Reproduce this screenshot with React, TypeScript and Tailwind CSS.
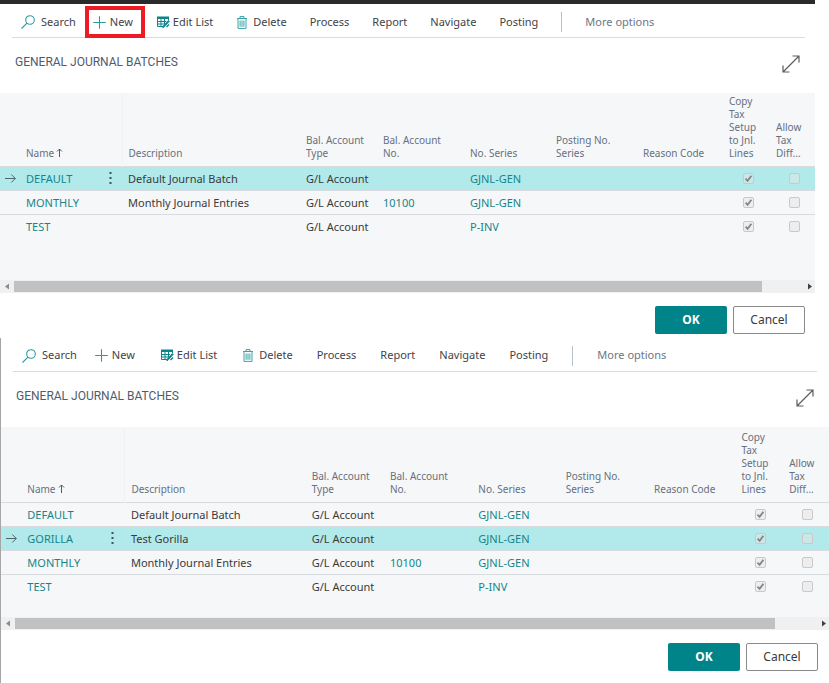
import React from 'react';

type Batch = {
  name: string;
  description: string;
  balAccountNo: string;
  series: string;
};

type PanelProps = {
  id: string;
  batches: Batch[];
  current: string;
  highlightNew?: boolean;
  wide?: boolean;
};

const DEFAULT: Batch = { name: 'DEFAULT', description: 'Default Journal Batch', balAccountNo: '', series: 'GJNL-GEN' };
const GORILLA: Batch = { name: 'GORILLA', description: 'Test Gorilla', balAccountNo: '', series: 'GJNL-GEN' };
const MONTHLY: Batch = { name: 'MONTHLY', description: 'Monthly Journal Entries', balAccountNo: '10100', series: 'GJNL-GEN' };
const TEST: Batch = { name: 'TEST', description: '', balAccountNo: '', series: 'P-INV' };

const SearchIcon = () => (
  <svg className="w-[14px] h-[14px] shrink-0" viewBox="0 0 14 14" fill="none" stroke="#2a9a9e" strokeWidth="1.1">
    <circle cx="9" cy="5" r="4.3" />
    <path d="M6 8.2L0.5 13.5" />
  </svg>
);

const PlusIcon = () => (
  <svg className="w-[13px] h-[13px] shrink-0" viewBox="0 0 13 13" fill="none" stroke="#2a9a9e" strokeWidth="1.1">
    <path d="M6.5 0.3V12.7M0.2 6.5H12.8" />
  </svg>
);

const EditListIcon = () => (
  <svg className="w-[13px] h-[13px] shrink-0" viewBox="0 0 13 13" fill="none" stroke="#0b858b">
    <path d="M0 0.5H12V3H0Z" fill="#0b858b" stroke="none" />
    <path d="M0.5 2V10.5H6M0.5 5.5H9M0.5 8H7M4 3V10.5M7.5 3V8M11.5 2V4" />
    <path d="M12.4 5.2L7.4 10.8L5.8 12L6.4 9.8L11.2 4.4Z" fill="#0b858b" strokeWidth="0.8" />
    <path d="M9.5 11L12 8.5" strokeWidth="1.4" />
  </svg>
);

const TrashIcon = () => (
  <svg className="w-[10px] h-[13px] shrink-0" viewBox="0 0 10 13" fill="none" stroke="#3aa3a7">
    <path d="M0 2.5H10M3 2.5V0.6H7V2.5M1 2.5V12.4H9V2.5" />
    <path d="M3.1 4.5V10.8M5 4.5V10.8M6.9 4.5V10.8" />
  </svg>
);

const ExpandIcon = () => (
  <svg className="w-[18px] h-[18px]" viewBox="0 0 18 18" fill="none" stroke="#5c5c5c" strokeWidth="1.2">
    <path d="M1 17L17 1M10.5 1H17V7.5M1 10.5V17H7.5" />
  </svg>
);

const RowArrow = () => (
  <svg className="w-[11px] h-[9px] ml-[5px]" viewBox="0 0 11 9" fill="none" stroke="#4d6668">
    <path d="M0 4.5H10.3M6.3 0.5L10.3 4.5L6.3 8.5" />
  </svg>
);

const DotsIcon = () => (
  <svg className="w-[3px] h-[12px]" viewBox="0 0 3 12" fill="#3c5557">
    <rect x="0.5" y="0" width="2" height="2" />
    <rect x="0.5" y="5" width="2" height="2" />
    <rect x="0.5" y="10" width="2" height="2" />
  </svg>
);

const SortIcon = () => (
  <svg className="w-[7px] h-[9px] inline-block align-baseline ml-[2px]" viewBox="0 0 7 9" fill="none" stroke="#505a68">
    <path d="M3.5 9V1M1 3.5L3.5 1L6 3.5" />
  </svg>
);

const CheckBox = ({ label, checked }: { label: string; checked: boolean }) => (
  <span className="relative block w-[11px] h-[11px] mx-auto">
    <input
      type="checkbox"
      aria-label={label}
      checked={checked}
      disabled
      readOnly
      className="appearance-none block w-[11px] h-[11px] rounded-[2px] border border-[#c9c9c9] bg-[#e6e6e6]/50"
    />
    {checked && (
      <svg className="absolute inset-0 w-[11px] h-[11px]" viewBox="0 0 11 11" fill="none" stroke="#858585" strokeWidth="1.8">
        <path d="M2.6 5.6L4.6 7.8L8.4 2.8" />
      </svg>
    )}
  </span>
);

const MENUS = ['Process', 'Report', 'Navigate', 'Posting'];
const LINK = 'text-[#15858a]';

const Panel = ({ id, batches, current, highlightNew, wide }: PanelProps) => {
  const cell = 'pl-1.5 pt-0.5 whitespace-nowrap';
  const checkCell = 'pl-1.5 pr-[3px]';
  const head = 'pl-1.5 pb-1.5 align-bottom font-normal';
  const iconGap = wide ? 'ml-[26px]' : 'ml-6';
  const menuGap = wide ? 'ml-6' : 'ml-[23px]';

  return (
    <section aria-labelledby={id}>
      {/* Action bar */}
      <div className={`flex items-center h-[34px] border-b border-[#dcdcdc] text-[11px] text-[#3f4347] whitespace-nowrap pl-[9px] ml-3 ${wide ? 'mr-3 pt-0.5' : 'mr-[10px] pt-[3px]'}`}>
        <button className="flex items-center gap-1.5"><SearchIcon />Search</button>
        <button className={`relative flex items-center gap-1 ${wide ? 'ml-[18px]' : 'ml-[17px]'}`}>
          <PlusIcon />New
          {highlightNew && <span className="absolute -left-2 -right-3 -inset-y-2 border-4 border-[#ed1c24]" />}
        </button>
        <button className={`flex items-center gap-[3px] ${iconGap}`}><EditListIcon />Edit List</button>
        <button className={`flex items-center gap-1.5 ${iconGap}`}><TrashIcon />Delete</button>
        {MENUS.map((menu) => <button key={menu} className={menuGap}>{menu}</button>)}
        <div className={`w-px h-5 bg-[#b9bfc7] ${wide ? 'mx-6' : 'mx-[23px]'}`} />
        <button className="text-[#6b7686]">More options</button>
      </div>

      {/* Title */}
      <div className="flex items-center justify-between h-[55px] px-[15px]">
        <h2 id={id} className="font-[Roboto,sans-serif] text-[12px] text-[#505c6d] pb-2">GENERAL JOURNAL BATCHES</h2>
        <button aria-label="Expand" className="pb-1"><ExpandIcon /></button>
      </div>

      {/* Batch list */}
      <div className={`bg-[#f6f7f9] ${wide ? 'pb-[19px]' : 'pb-[42px]'}`}>
        <table className="w-full table-fixed border-collapse text-left text-[11px] text-[#3a3a3a]">
          <colgroup>
            <col className="w-[20px]" />
            <col className="w-[78px]" />
            <col className="w-[24px]" />
            <col className="w-[178px]" />
            <col className="w-[77px]" />
            <col className="w-[87px]" />
            <col className="w-[86px]" />
            <col className="w-[87px]" />
            <col className="w-[86px]" />
            <col className="w-[47px]" />
            <col className="w-[45px]" />
          </colgroup>
          <thead>
            <tr className={`text-[10px] leading-[13px] text-[#66707f] ${wide ? 'h-[75px]' : 'h-[73px]'}`}>
              <td />
              <th className={head}>Name<SortIcon /></th>
              <td className="border-r border-[#eff1f3]" />
              <th className={head}>Description</th>
              <th className={head}>Bal. Account<br />Type</th>
              <th className={head}>Bal. Account<br />No.</th>
              <th className={head}>No. Series</th>
              <th className={head}>Posting No.<br />Series</th>
              <th className={head}>Reason Code</th>
              <th className={head}>Copy<br />Tax<br />Setup<br />to Jnl.<br />Lines</th>
              <th className={head}>Allow<br />Tax<br />Diff...</th>
            </tr>
          </thead>
          <tbody>
            {batches.map((batch) => {
              const active = batch.name === current;
              return (
                <tr key={batch.name} className={`h-6 border-t border-[#d9dcdf] ${active ? 'bg-[#b2e9eb]' : ''}`}>
                  <td>{active && <RowArrow />}</td>
                  <td className={cell}><a href="#" className={LINK}>{batch.name}</a></td>
                  <td>{active && <button aria-label="Show more options" className="block mx-auto"><DotsIcon /></button>}</td>
                  <td className={cell}>{batch.description}</td>
                  <td className={cell}>G/L Account</td>
                  <td className={cell}>{batch.balAccountNo && <a href="#" className={LINK}>{batch.balAccountNo}</a>}</td>
                  <td className={cell}><a href="#" className={LINK}>{batch.series}</a></td>
                  <td />
                  <td />
                  <td className={checkCell}><CheckBox label="Copy Tax Setup to Jnl. Lines" checked /></td>
                  <td className={checkCell}><CheckBox label="Allow Tax Difference" checked={false} /></td>
                </tr>
              );
            })}
          </tbody>
        </table>
      </div>

      {/* Horizontal scroll bar */}
      <div className="flex items-center h-[13px] bg-[#f0f0f0]">
        <svg className="w-[14px] h-[7px] shrink-0" viewBox="0 0 14 7" fill="#8c8c8c"><path d="M9 0.5V6.5L5 3.5Z" /></svg>
        <div className="flex-1">
          <div className="w-[95%] h-[11px] bg-[#c1c1c1]" />
        </div>
        <svg className="w-[14px] h-[7px] shrink-0" viewBox="0 0 14 7" fill="#404040"><path d="M7 0.5V6.5L11 3.5Z" /></svg>
      </div>

      {/* Dialog buttons */}
      <div className={`flex justify-end gap-1.5 pt-[13px] text-[12px] ${wide ? 'pr-[11px]' : 'pr-[10px]'}`}>
        <button className="w-[72px] h-7 rounded-[2px] bg-[#00848a] text-white font-bold">OK</button>
        <button className="w-[72px] h-7 rounded-[2px] border border-[#8a8a8a] bg-white text-[#3a3a3a]">Cancel</button>
      </div>
    </section>
  );
};

const App: React.FC = () => {
  return (
    <div className="min-h-screen bg-white font-['Noto_Sans',sans-serif]">
      <div className="mr-[14px] border-t-4 border-[#2a2a2a] pb-1">
        <Panel id="batches-before" batches={[DEFAULT, MONTHLY, TEST]} current="DEFAULT" highlightNew />
      </div>
      <div className="border-l border-[#a6a6a6] pb-3">
        <Panel id="batches-after" batches={[DEFAULT, GORILLA, MONTHLY, TEST]} current="GORILLA" wide />
      </div>
    </div>
  );
};

export default App;
